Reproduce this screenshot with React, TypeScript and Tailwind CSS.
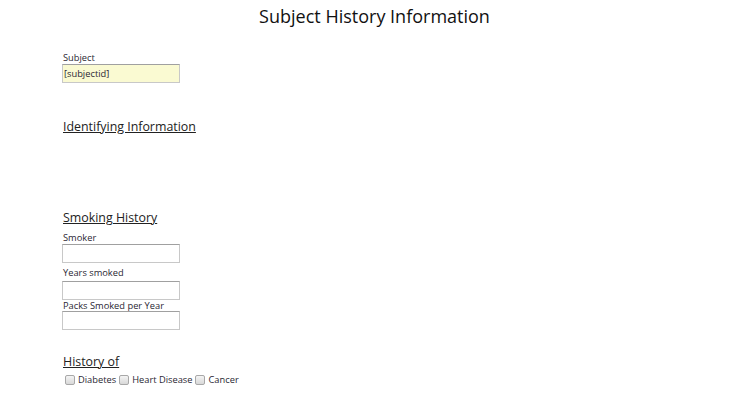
const font = { fontFamily: '"Open Sans", "Liberation Sans", sans-serif' };

interface FieldProps {
    label: string;
    value?: string;
    highlight?: boolean;
    className?: string;
    inputClass?: string;
}

const Field = ({ label, value, highlight, className, inputClass }: FieldProps) => (
    <div className={`flex flex-col ${className ?? ""}`}>
        <label className="text-[9.3px] leading-[12px] text-[#2a1f33]">{label}</label>
        <input
            readOnly
            value={value ?? ""}
            className={`w-[118px] h-[19px] px-[1px] text-[9.3px] text-[#2a1f33] border border-[#c8c8c8] border-t-[#a0a0a0] outline-none ${
                highlight ? "bg-[#fafad2]" : "bg-white"
            } ${inputClass ?? ""}`}
            style={font}
        />
    </div>
);

const Check = ({ label }: { label: string }) => (
    <label className="flex items-center mr-[3px]">
        <input
            type="checkbox"
            className="appearance-none w-[10px] h-[10px] rounded-[2px] border border-[#a8a8a8] bg-gradient-to-b from-[#f4f4f4] to-[#d8d8d8] mr-[3px]"
        />
        <span className="text-[9.3px] leading-[12px] text-[#2a1f33]">{label}</span>
    </label>
);

export default function App() {
    return (
        <div className="w-[730px] h-[397px] bg-white overflow-hidden" style={font}>
            <h1 className="pl-[19px] pt-[4px] text-center text-[18px] leading-[25px] text-[#111]">
                Subject History Information
            </h1>

            <div className="pl-[62px] pt-[23px]">
                <Field label="Subject" value="[subjectid]" highlight className="ml-[1px]" inputClass="-ml-[1px]" />

                {/* Identifying Information */}
                <h2 className="mt-[35px] ml-[1px] text-[12.4px] leading-[18px] underline text-[#222]">Identifying Information</h2>

                {/* Smoking History */}
                <h2 className="mt-[73px] ml-[1px] text-[12.4px] leading-[18px] underline text-[#222]">Smoking History</h2>
                <Field label="Smoker" className="mt-[5px] ml-[1px]" inputClass="-ml-[1px]" />
                <Field label="Years smoked" className="mt-[4px] ml-[1px]" inputClass="-ml-[1px] mt-[2px]" />
                <Field label="Packs Smoked per Year" className="mt-[0px] ml-[1px]" inputClass="-ml-[1px] -mt-[1px]" />

                {/* History of */}
                <h2 className="mt-[23px] ml-[1px] text-[12.4px] leading-[18px] underline text-[#222]">History of</h2>
                <div className="flex items-center pl-[3px] mt-[3px]">
                    <Check label="Diabetes" />
                    <Check label="Heart Disease" />
                    <Check label="Cancer" />
                </div>
            </div>
        </div>
    );
}
